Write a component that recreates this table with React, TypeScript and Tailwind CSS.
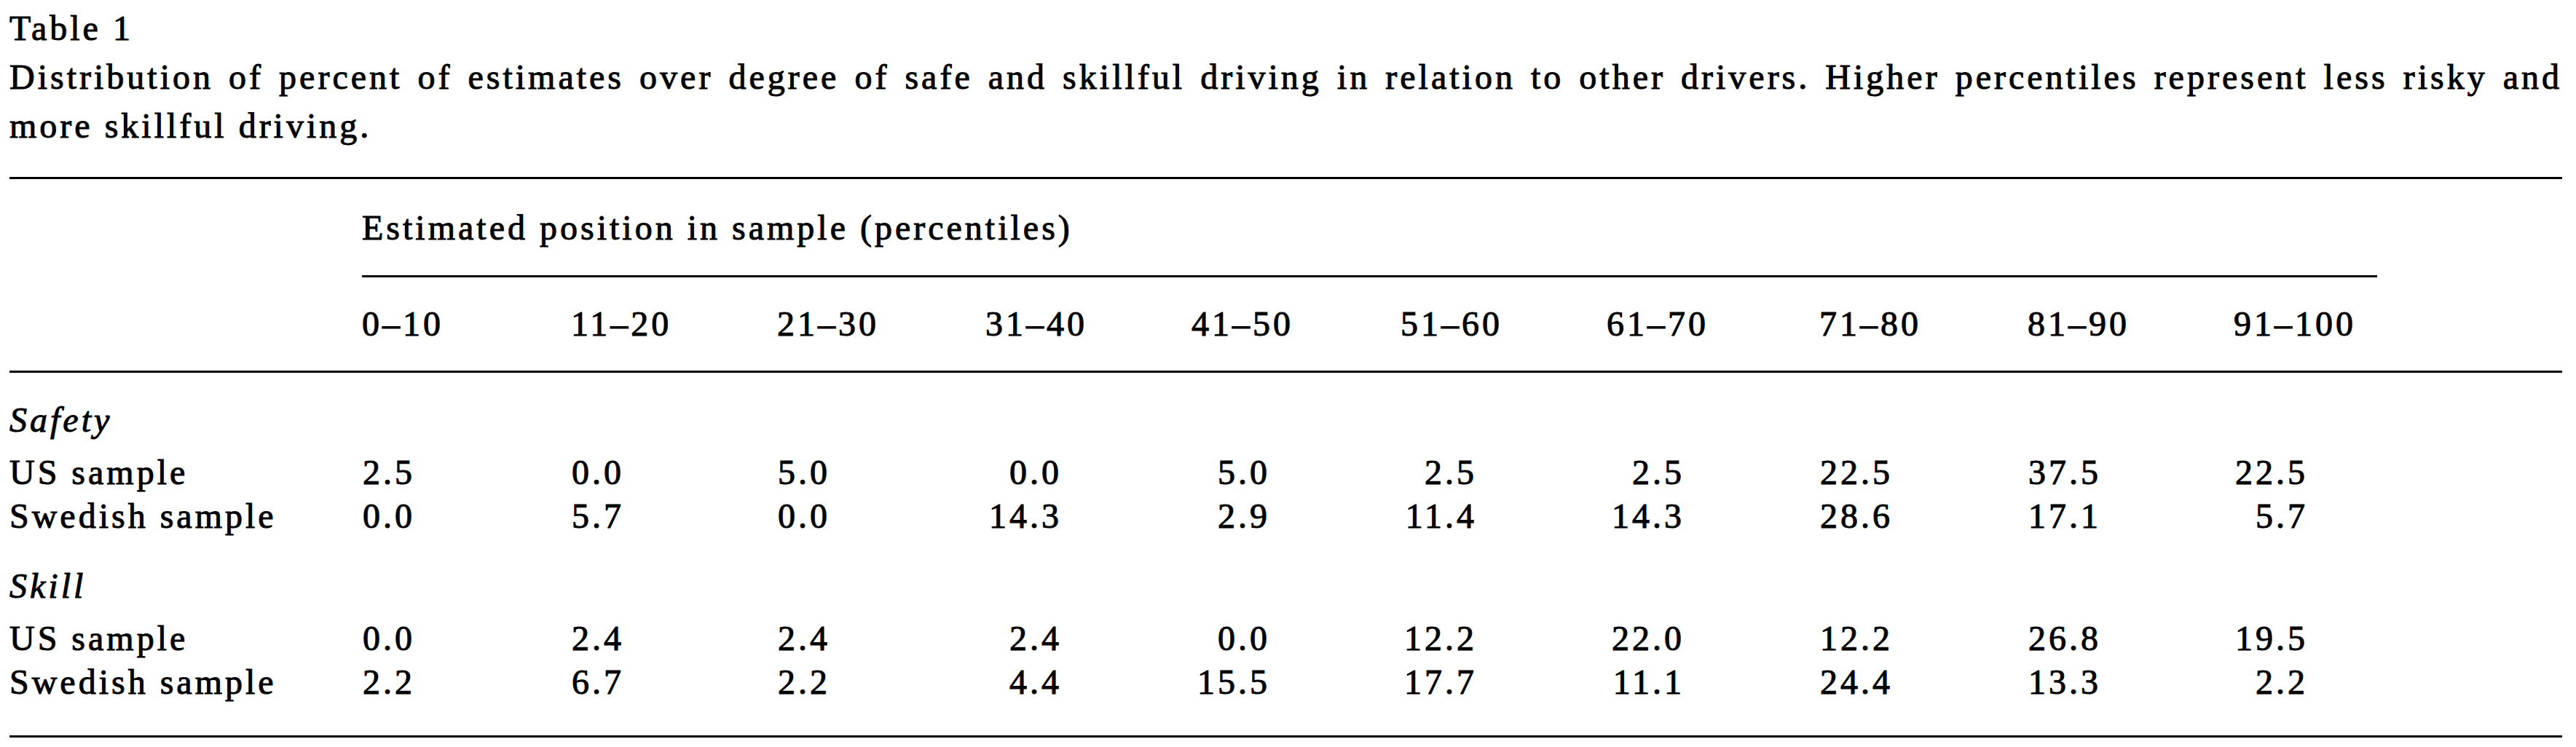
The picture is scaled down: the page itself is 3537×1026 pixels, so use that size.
const ranges = ['0–10', '11–20', '21–30', '31–40', '41–50', '51–60', '61–70', '71–80', '81–90', '91–100']

// right-aligned numeric cells, width per column so decimals line up like the print
const cellW = [
  'w-[73px]',
  'w-[73px]',
  'w-[73px]',
  'w-[105px]',
  'w-[108px]',
  'w-[105px]',
  'w-[107px]',
  'w-[101px]',
  'w-[101px]',
  'w-[102px]',
]

const groups = [
  {
    title: 'Safety',
    rows: [
      { label: 'US sample', values: ['2.5', '0.0', '5.0', '0.0', '5.0', '2.5', '2.5', '22.5', '37.5', '22.5'] },
      { label: 'Swedish sample', values: ['0.0', '5.7', '0.0', '14.3', '2.9', '11.4', '14.3', '28.6', '17.1', '5.7'] },
    ],
  },
  {
    title: 'Skill',
    rows: [
      { label: 'US sample', values: ['0.0', '2.4', '2.4', '2.4', '0.0', '12.2', '22.0', '12.2', '26.8', '19.5'] },
      { label: 'Swedish sample', values: ['2.2', '6.7', '2.2', '4.4', '15.5', '17.7', '11.1', '24.4', '13.3', '2.2'] },
    ],
  },
]

const grid =
  'grid grid-cols-[484px_287px_283px_286px_283px_287px_283px_292px_286px_283px_1fr] leading-[60px]'

function Rule({ className = '' }: { className?: string }) {
  return <div className={`h-[3px] bg-black ${className}`} />
}

function DataRow({ label, values }: { label: string; values: string[] }) {
  return (
    <div className={grid}>
      <div className="whitespace-nowrap">{label}</div>
      {values.map((v, i) => (
        <div key={i}>
          <div className={`${cellW[i]} text-right`}>{v}</div>
        </div>
      ))}
    </div>
  )
}

export default function App() {
  return (
    <div className="min-h-screen bg-white text-black">
      <div className="ml-[13px] w-[3505px] [font-family:'Liberation_Serif','Times_New_Roman',serif] text-[48px] tracking-[4px] [-webkit-text-stroke:1px_#000]">
        {/* Caption */}
        <div className="pt-[5px] leading-[67px]">
          <p>Table 1</p>
          <p className="[text-align-last:justify]">
            Distribution of percent of estimates over degree of safe and skillful driving in relation to other drivers. Higher percentiles represent less risky and
          </p>
          <p>more skillful driving.</p>
        </div>

        <Rule className="mt-[37px]" />

        {/* Spanner header */}
        <div className={`${grid} mt-[37px]`}>
          <div className="col-start-2 col-span-10 whitespace-nowrap">
            Estimated position in sample (percentiles)
          </div>
        </div>
        <div className="mt-[35px] ml-[484px] w-[2767px]">
          <Rule />
        </div>

        {/* Column heads */}
        <div className={`${grid} mt-[34px]`}>
          <div />
          {ranges.map((r) => (
            <div key={r} className="whitespace-nowrap">{r}</div>
          ))}
        </div>

        <Rule className="mt-[34px]" />

        {/* Body */}
        {groups.map((g, gi) => (
          <div key={g.title} className={gi === 0 ? 'mt-[35px]' : 'mt-[36px]'}>
            <div className="leading-[60px] italic">{g.title}</div>
            <div className="mt-[12px]">
              {g.rows.map((row) => (
                <DataRow key={row.label} label={row.label} values={row.values} />
              ))}
            </div>
          </div>
        ))}

        <Rule className="mt-[43px]" />
      </div>
    </div>
  )
}
